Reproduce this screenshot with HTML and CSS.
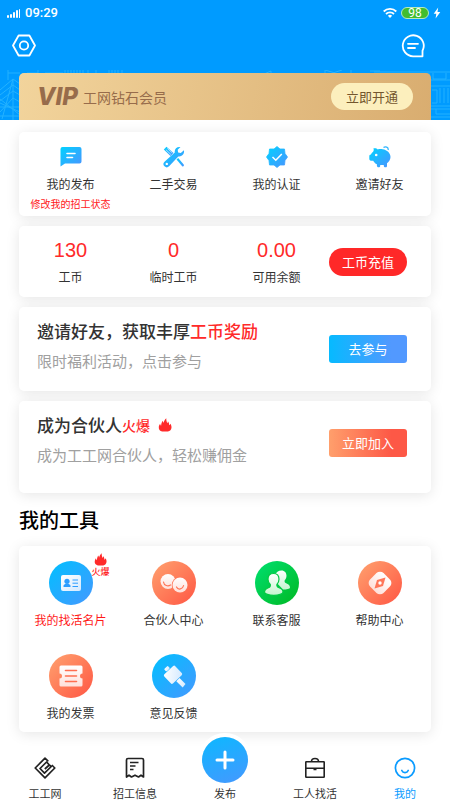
FILE: index.html
```html
<!DOCTYPE html>
<html lang="zh-CN">
<head>
<meta charset="utf-8">
<meta name="viewport" content="width=device-width, initial-scale=1">
<title>我的</title>
<link rel="stylesheet" href="styles.css">
</head>
<body>
<svg class="defs" width="0" height="0" aria-hidden="true">
  <defs>
    <linearGradient id="blue" x1="0" y1="0" x2="1" y2="1"><stop offset="0" stop-color="#00d2ff"/><stop offset="1" stop-color="#4a93ff"/></linearGradient>
    <linearGradient id="pale" x1="0" y1="0" x2="0" y2="1"><stop offset="0" stop-color="#fff"/><stop offset="1" stop-color="#ffe0da"/></linearGradient>
    <linearGradient id="ice" x1="0" y1="0" x2="1" y2="1"><stop offset="0" stop-color="#fff"/><stop offset="1" stop-color="#d3e9ff"/></linearGradient>
    <linearGradient id="mint" x1="0" y1="0" x2="0" y2="1"><stop offset="0" stop-color="#fff"/><stop offset="1" stop-color="#c4f5cf"/></linearGradient>
    <symbol id="flame" viewBox="0 0 14 14"><path d="M4.200 13.500C1.800 13 .500 11.200.800 9 .900 7.600 1.500 6.500 2.100 5.700c.200 1 .500 1.600 1 2C3.300 5.300 4 3.800 4.600 2.700c.500.900.700 1.500.800 2.400C6 3.200 6.700 1.700 8.300.300c-.100 2.200.300 3.700 1.200 5 .300-.700.400-1.300.400-2 1 1.300 1.300 2.500 1.300 4 .500-.300.900-.800 1.100-1.600.800 1.100 1.300 2.300 1.200 3.700-.100 2-1.500 3.700-3.600 4.100z" fill="#ff2a2a"/></symbol>
  </defs>
</svg>

<header class="header">
  <div class="status">
    <div class="status-group">
      <svg width="14" height="9" viewBox="0 0 14 9" fill="#fff"><rect y="6" width="2" height="3" rx="1"/><rect x="3" y="5" width="2" height="4" rx="1"/><rect x="6" y="3" width="2" height="6" rx="1"/><rect x="9" y="1" width="2" height="8" rx="1"/><rect x="12" y="0" width="1" height="9" rx=".5"/></svg>
      <span class="clock">09:29</span>
    </div>
    <div class="status-group">
      <svg width="14" height="10" viewBox="0 0 14 10" fill="none" stroke="#fff" stroke-width="1.800"><path d="M.700 3.500a9 9 0 0 1 12.600 0M3 6a5.700 5.700 0 0 1 8 0"/><path d="M7 10 4.900 7.800a3 3 0 0 1 4.200 0z" fill="#fff" stroke="none"/></svg>
      <span class="battery">98</span>
      <svg width="8" height="12" viewBox="0 0 8 12" fill="#fff"><path d="M5.200.500.700 6.700h2.600L2.600 11.500 7.300 5H4.500z"/></svg>
    </div>
  </div>
  <div class="actions">
    <button class="icon-button" type="button" aria-label="设置">
      <svg width="24" height="24" viewBox="0 0 24 24" fill="none" stroke="#fff" stroke-width="1.800" stroke-linejoin="round"><path d="M6.600 1.500h10.800L23 11.500l-5.600 10H6.600L1 11.500z"/><circle cx="12" cy="11.500" r="4.200"/></svg>
    </button>
    <button class="icon-button" type="button" aria-label="消息">
      <svg width="24" height="24" viewBox="0 0 24 24" fill="none" stroke="#fff" stroke-width="1.800" stroke-linecap="round" stroke-linejoin="round"><path d="M12 22.300h9.500v-5.500A10.500 10.500 0 1 0 12 22.300z"/><path d="M7 9.800h10M7 14h7"/></svg>
    </button>
  </div>
  <svg class="skyline skyline-left" width="225" height="50" viewBox="0 0 225 50" fill="none" stroke="#33bcff" stroke-width="1"><path d="M8 10V0M8 3h12M38 10V0M65 10V0M68 10V0M71 10V0M74 10V0M77 10V0M80 10V0M83 10V0M88 10V0M96 10V0M109 10V0M112 10V0M115 10V0M118 10V0M122 10V0M27 3h11M45 3h18"/><path d="M0 20 13 9l7 5M0 25l13-10 7 5M0 31l13-10 7 4M0 37h20M0 42l13-14 7 4M0 29l20 16M2 49 13 9v41M0 33l20 9M0 46h20"/></svg>
  <svg class="skyline skyline-right" width="250" height="50" viewBox="0 0 250 50" fill="none" stroke="#33bcff" stroke-width="1"><path d="M64 4l7-3v3M125 10V0l10 3M130 4l12-4M151 4V0M170 1h10M174 2h76M176 6h20M200 3v7M208 3v7M217 3v6h12V3M233 3v6h13V3M230 10h20M231 16h19M232 20h5v13h-5M240 18v15M244 18v15M248 18v15M231 36h19M231 39h19M236 39v5h14M231 47h19"/></svg>
  <section class="vip">
    <div class="vip-title"><span class="vip-mark">VIP</span><span>工网钻石会员</span></div>
    <button class="vip-button" type="button">立即开通</button>
  </section>
</header>

<main class="content">
  <section class="card shortcuts">
    <a class="shortcut" href="#posts">
      <svg width="22" height="22" viewBox="0 0 22 22"><path d="M2.500 1h17a2 2 0 0 1 2 2v12.500a2 2 0 0 1-2 2H5L.500 20.500V3a2 2 0 0 1 2-2z" fill="url(#blue)"/><path d="M7 7.500h8M7 11.500h5.500" stroke="#fff" stroke-width="1.600" stroke-linecap="round"/></svg>
      <span>我的发布</span><span class="hint">修改我的招工状态</span>
    </a>
    <a class="shortcut" href="#market">
      <svg width="22" height="22" viewBox="0 0 22 22"><g fill="url(#blue)"><path d="M.800 3.500 3.500.800l7 6.200-3 3z"/><path d="M13.500 13.500l1.700-1.500 5.500 6.500c.600.900 0 2.400-1.300 2z"/><path d="M20.900 4.300c.900 3.500-2.200 6.800-5.600 6.100L6.100 20.300a3.200 3.200 0 0 1-4.600-4.600L11.800 6.400C11.100 3.200 14 .300 17.500 1.100l-2.800 2.700.4 2.700 2.700.500z"/></g><path d="m2.900 3.700 5 4.800M4.300 2.400l5 4.600" stroke="#fff" stroke-width=".6"/><circle cx="3.800" cy="17.900" r="1.200" fill="#fff"/></svg>
      <span>二手交易</span>
    </a>
    <a class="shortcut" href="#verify">
      <svg width="22" height="22" viewBox="0 0 22 22"><path d="M11 .500l3 2.500h4.500l.500 4.500 2.500 3.500-2.500 3.500-.500 4.500H14l-3 2.500L8 19H3.500L3 14.500.500 11 3 7.500 3.500 3H8z" fill="url(#blue)" stroke="url(#blue)" stroke-width=".8" stroke-linejoin="round"/><path d="m6.500 11 3.300 3.300 6-6.300" fill="none" stroke="#fff" stroke-width="1.500"/></svg>
      <span>我的认证</span>
    </a>
    <a class="shortcut" href="#invite">
      <svg width="22" height="22" viewBox="0 0 22 22"><path d="M4.300 2.500c1.800-.500 3.500 0 4.500.900 1.300-.500 3.200-.500 4.900-.1 4.300.7 7.800 3.700 7.800 7.700 0 2.600-1.500 4.800-3.500 6.300v2.500c0 1-.500 1.500-1.500 1.500s-1.700-.5-1.700-1.500V19h-3.600v.8c0 1-.5 1.500-1.600 1.500s-1.700-.6-1.700-1.500V18.300c-1.700-.8-2.900-2-3.700-3.600H2C.8 14.500.300 13.900.300 12.800v-2.600c0-1 .5-1.500 1.600-1.600.4-1 1.200-2.100 2.200-2.900C4.600 4.800 5.200 3.500 4.300 2.500z" fill="url(#blue)"/><path d="M14.500 1.600c1.800-1.500 5.200-.5 4.600 2.400" fill="none" stroke="#2fb5ff" stroke-width="1.300"/><circle cx="7.200" cy="9" r="1.300" fill="#fff"/></svg>
      <span>邀请好友</span>
    </a>
  </section>

  <section class="card balances">
    <div class="balance"><strong>130</strong><span>工币</span></div>
    <div class="balance"><strong>0</strong><span>临时工币</span></div>
    <div class="balance"><strong>0.00</strong><span>可用余额</span></div>
    <button class="action recharge" type="button">工币充值</button>
  </section>

  <section class="card promo">
    <div class="promo-text">
      <h2>邀请好友，获取丰厚<em>工币奖励</em></h2>
      <p>限时福利活动，点击参与</p>
    </div>
    <button class="action join-event" type="button">去参与</button>
  </section>

  <section class="card promo promo-tall">
    <div class="promo-text">
      <h2>成为合伙人<em class="hot">火爆</em><svg class="hot-flame" width="14" height="14"><use href="#flame"/></svg></h2>
      <p>成为工工网合伙人，轻松赚佣金</p>
    </div>
    <button class="action join-partner" type="button">立即加入</button>
  </section>

  <h1 class="tools-title">我的工具</h1>
  <section class="card tools">
    <a class="tool tool-hot" href="#card">
      <span class="disc disc-blue"><svg width="44" height="44" viewBox="0 0 44 44"><rect x="12" y="14" width="20" height="16" rx="2" fill="url(#ice)"/><circle cx="18" cy="20.300" r="2.600" fill="#2c9dff"/><path d="M14.500 26v-1.200c0-1.200 1.600-1.800 2.400-2.100h2.200c.800.300 2.400.900 2.400 2.100V26z" fill="#2c9dff"/><path d="M23.500 19h5.500M23.500 22.200h5.500M23.500 25.500h5.500" stroke="#2c9dff"/></svg></span>
      <span>我的找活名片</span>
      <span class="badge"><svg width="13" height="13"><use href="#flame"/></svg>火爆</span>
    </a>
    <a class="tool" href="#partner">
      <span class="disc disc-orange"><svg width="44" height="44" viewBox="0 0 44 44"><circle cx="16" cy="20.500" r="7.500" fill="url(#pale)"/><path d="M11.500 21c.500 3.700 4.500 4.700 7 3" fill="none" stroke="#ff7456" stroke-width="1.200" stroke-linecap="round"/><circle cx="28" cy="24" r="8.300" fill="#ff7658"/><circle cx="28" cy="24" r="7.500" fill="url(#pale)"/><path d="M24.500 26c1.700 3.400 6.300 2.300 7.100-1.500" fill="none" stroke="#ff7456" stroke-width="1.200" stroke-linecap="round"/></svg></span>
      <span>合伙人中心</span>
    </a>
    <a class="tool" href="#service">
      <span class="disc disc-green"><svg width="44" height="44" viewBox="0 0 44 44"><g fill="url(#mint)"><path d="M26.500 9.500c3.200 0 5 2.300 5 5.200 0 2-.9 3.500-1.900 4.700-.3 1.700.5 2.300 2 3 2 .9 3.400 2 3.400 4 0 1.300-3.500 2.200-7 2.200L20 20V14c1-2.500 3.500-4.500 6.500-4.500z"/><path d="M18.500 12.500c3.500 0 5.500 2.500 5.500 5.800 0 2.300-1 4-2.100 5.200-.3 2 .6 2.600 2.200 3.200 2.300.9 3.900 2 3.900 4.300 0 2-4.500 3.300-9.200 3.300S9.500 33 9.500 31c0-2.300 1.700-3.400 3.900-4.300 1.600-.6 2.200-1.200 1.900-3.200-1.300-1.200-2.300-2.900-2.300-5.200 0-3.300 2-5.800 5.500-5.800z" stroke="#03c943" stroke-width="1.200"/></g></svg></span>
      <span>联系客服</span>
    </a>
    <a class="tool" href="#help">
      <span class="disc disc-orange"><svg width="44" height="44" viewBox="0 0 44 44"><rect x="12.500" y="12.500" width="19" height="19" rx="5" fill="url(#pale)" transform="rotate(45 22 22)"/><path d="M27.500 16.500 25 25l-8.500 2.500L19 19z" fill="#ff7659"/><circle cx="22" cy="22" r="1.700" fill="#fff"/></svg></span>
      <span>帮助中心</span>
    </a>
    <a class="tool" href="#invoice">
      <span class="disc disc-orange"><svg width="44" height="44" viewBox="0 0 44 44"><path d="M12 11.500h20a1.500 1.500 0 0 1 1.500 1.500v6.500a2.500 2.500 0 0 0 0 5V31a1.500 1.500 0 0 1-1.500 1.500H12a1.500 1.500 0 0 1-1.500-1.500v-6.500a2.500 2.500 0 0 0 0-5V13a1.500 1.500 0 0 1 1.500-1.500z" fill="url(#pale)"/><path d="M16.500 16.500h11M16.500 22h11M16.500 27.500h11" stroke="#ff6e50" stroke-width="1.600" stroke-linecap="round"/></svg></span>
      <span>我的发票</span>
    </a>
    <a class="tool" href="#feedback">
      <span class="disc disc-blue"><svg width="44" height="44" viewBox="0 0 44 44" fill="url(#ice)"><rect x="13.500" y="14.500" width="15" height="12.500" rx="1.500" transform="rotate(-43 21 20.700)"/><rect x="12.500" y="13" width="5" height="3.500" rx="1" transform="rotate(-43 15 14.700)"/><path d="m24.300 27.200 3.200-3.200 6 6-2.800 3.400z"/></svg></span>
      <span>意见反馈</span>
    </a>
  </section>
</main>

<nav class="tabs" aria-label="主导航">
  <a class="tab" href="#home">
    <svg width="22" height="22" viewBox="0 0 22 22" fill="none" stroke="#222" stroke-width="1.700" stroke-linejoin="round"><path d="M14.300 4.300 11 1.200 1.200 11l9.800 9.800 9.800-9.800-3-3"/><path d="M14.800 7.300 12.600 5 6 11.500l4.500 4.700 6.800-6.700-2-1.500-4.500 4"/></svg>
    <span>工工网</span>
  </a>
  <a class="tab" href="#jobs">
    <svg width="22" height="22" viewBox="0 0 22 22" fill="none" stroke="#222" stroke-width="1.700" stroke-linejoin="round"><path d="M2.500 20V3a1.500 1.500 0 0 1 1.500-1.500h14A1.500 1.500 0 0 1 19.500 3v17l-2.500-1.800-2.500 1.800-3.500-1.800L7.500 20 5 18.200z"/><path d="M6 5.500h8.500M6 9h5.500M6 12.500h3.500"/></svg>
    <span>招工信息</span>
  </a>
  <a class="tab" href="#publish">
    <span class="plus"><svg width="20" height="20" viewBox="0 0 20 20" stroke="#fff" stroke-width="3" stroke-linecap="round"><path d="M10 2v16M2 10h16"/></svg></span>
    <span>发布</span>
  </a>
  <a class="tab" href="#workers">
    <svg width="22" height="22" viewBox="0 0 22 22" fill="none" stroke="#222" stroke-width="1.600"><rect x="1.800" y="4.800" width="18.400" height="15.400" rx=".5"/><path d="M7.500 4.500C7.500 2.300 8.500 1.500 11 1.500s3.500.8 3.500 3M2 11.300h18M9.500 12.500h3"/></svg>
    <span>工人找活</span>
  </a>
  <a class="tab tab-active" href="#me" aria-current="page">
    <svg width="22" height="22" viewBox="0 0 22 22" fill="none" stroke="#0a9bff" stroke-width="1.700" stroke-linecap="round"><circle cx="11" cy="11" r="9.600"/><path d="M7.800 13.500c1.200 2.700 5.200 2.700 6.400 0"/></svg>
    <span>我的</span>
  </a>
</nav>
</body>
</html>
```
FILE: styles.css
```css
* {
  box-sizing: border-box;
}

body {
  display: flex;
  flex-direction: column;
  min-height: 100vh;
  margin: 0;
  background: #fff;
  color: #333;
  font-family: "Noto Sans CJK SC", sans-serif;
  font-size: 12px;
  line-height: 16px;
}

a {
  color: inherit;
  text-decoration: none;
}

button {
  padding: 0;
  border: 0;
  font: inherit;
  cursor: pointer;
}

svg {
  display: block;
  flex: none;
}

h1,
h2,
p {
  margin: 0;
}

em {
  color: #ff2a2a;
  font-style: normal;
}

.defs {
  position: absolute;
}

/* Header */
.header {
  position: relative;
  background: #009bff;
}

.status {
  display: flex;
  justify-content: space-between;
  height: 26px;
  padding: 0 9px 0 7px;
  color: #fff;
}

.status-group {
  display: flex;
  align-items: center;
  gap: 4px;
}

.clock {
  font-family: Roboto, sans-serif;
  font-size: 13px;
  font-weight: 500;
}

.battery {
  width: 28px;
  border: 1px solid #b5e8c0;
  border-radius: 6px;
  background: #42bd2f;
  font-family: Roboto, sans-serif;
  font-size: 12px;
  line-height: 10px;
  text-align: center;
}

.actions {
  display: flex;
  justify-content: space-between;
  padding: 8px 25px 15px 12px;
}

.icon-button {
  background: none;
}

.skyline {
  position: absolute;
  bottom: 0;
  opacity: 0.7;
}

.skyline-left {
  left: 0;
}

.skyline-right {
  right: 0;
}

.vip {
  position: relative;
  display: flex;
  align-items: center;
  justify-content: space-between;
  height: 47px;
  margin: 0 19px;
  padding: 0 18px;
  border-radius: 5px 5px 0 0;
  background: linear-gradient(100deg, #f2d49c, #d9ad70);
  color: #976c4b;
}

.vip-title {
  display: flex;
  align-items: center;
  gap: 5px;
  font-size: 14px;
}

.vip-mark {
  font-family: Inter, "Liberation Sans", sans-serif;
  font-size: 24px;
  font-style: italic;
  font-weight: 800;
}

.vip-button {
  width: 82px;
  height: 27px;
  border-radius: 14px;
  background: #fcefbd;
  color: #73562e;
  font-size: 13px;
}

/* Cards */
.content {
  display: flex;
  flex-direction: column;
  gap: 10px;
  padding: 12px 19px 0;
}

.card {
  border-radius: 5px;
  background: #fff;
  box-shadow: 0 2px 14px rgba(0, 0, 0, 0.1);
}

.shortcuts,
.balances,
.tools {
  display: grid;
  grid-template-columns: repeat(4, 1fr);
}

.shortcuts {
  padding: 14px 0 4px;
}

.shortcut {
  display: flex;
  flex-direction: column;
  align-items: center;
}

.shortcut svg {
  margin-bottom: 8px;
}

.hint {
  margin-top: 4px;
  color: #ff1a1a;
  font-size: 10px;
}

.balances {
  align-items: center;
  padding: 12px 0;
}

.balance {
  display: flex;
  flex-direction: column;
  align-items: center;
  gap: 7px;
}

.balance strong {
  color: #ff2a2a;
  font-family: "Liberation Sans", sans-serif;
  font-size: 20px;
  font-weight: 400;
  line-height: 24px;
}

.action {
  width: 78px;
  height: 28px;
  border-radius: 3px;
  color: #fff;
  font-size: 13px;
}

.recharge {
  justify-self: end;
  margin-right: 24px;
  border-radius: 14px;
  background: #ff2828;
}

.join-event {
  background: linear-gradient(90deg, #06baff, #5299ff 80%);
}

.join-partner {
  background: linear-gradient(90deg, #ff9f6c, #fd5846 80%);
}

.promo {
  display: flex;
  align-items: flex-start;
  justify-content: space-between;
  padding: 12px 24px 20px 18px;
}

.promo-tall {
  padding-bottom: 28px;
}

.promo .action {
  margin-top: 16px;
}

.promo h2 {
  display: flex;
  align-items: center;
  margin-bottom: 8px;
  font-size: 17px;
  font-weight: 500;
  line-height: 24px;
}

.promo p {
  color: #a0a0a0;
  font-size: 15px;
  line-height: 20px;
}

.hot {
  font-size: 14px;
}

.hot-flame {
  margin-left: 8px;
}

/* Tools */
.tools-title {
  margin: 3px 0 2px;
  color: #000;
  font-size: 20px;
  font-weight: 500;
  line-height: 28px;
}

.tools {
  row-gap: 26px;
  padding: 15px 0 11px;
}

.tool {
  position: relative;
  display: flex;
  flex-direction: column;
  align-items: center;
  gap: 7px;
}

.tool-hot {
  color: #ff1a1a;
}

.disc {
  border-radius: 50%;
}

.disc-blue {
  background: linear-gradient(135deg, #00c0ff, #4598ff);
}

.disc-orange {
  background: linear-gradient(135deg, #ffa26f, #ff5643);
}

.disc-green {
  background: linear-gradient(135deg, #00e070, #00b823);
}

.badge {
  position: absolute;
  top: -8px;
  left: calc(50% + 21px);
  display: flex;
  flex-direction: column;
  align-items: center;
  font-size: 9px;
  font-weight: 500;
  line-height: 12px;
}

/* Bottom navigation */
.tabs {
  display: grid;
  grid-template-columns: repeat(5, 1fr);
  align-items: end;
  margin-top: auto;
  font-size: 11px;
  line-height: 14px;
}

.tab {
  display: flex;
  flex-direction: column;
  align-items: center;
  gap: 7px;
}

.tab-active {
  color: #0a9bff;
}

.plus {
  display: grid;
  place-items: center;
  width: 46px;
  height: 46px;
  margin-bottom: -4px;
  border-radius: 50%;
  background: linear-gradient(160deg, #0cb8ff, #4598ff);
  box-shadow: 0 0 0 4px #fff;
}
```
